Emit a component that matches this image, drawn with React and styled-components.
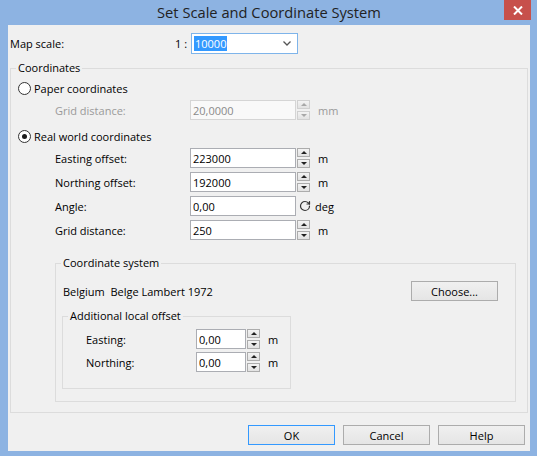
import React from "react";
import styled, { createGlobalStyle } from "styled-components";

const GlobalStyle = createGlobalStyle`
  html, body { margin: 0; padding: 0; }
  body {
    font-family: "Open Sans", "Noto Sans", sans-serif;
    font-size: 11px;
    color: #000;
  }
  * { box-sizing: border-box; }
`;

const Window = styled.div`
  width: 537px;
  height: 456px;
  background: #8db3e2;
  padding: 0 7px 5px 8px;
  display: flex;
  flex-direction: column;
`;

const TitleBar = styled.div`
  height: 25px;
  display: grid;
  grid-template-columns: 1fr auto 1fr;
  align-items: center;
`;

const Title = styled.div`
  grid-column: 2;
  font-size: 14.7px;
  line-height: 25px;
  color: #222;
`;

const CloseButton = styled.div`
  grid-column: 3;
  justify-self: end;
  align-self: start;
  width: 27px;
  height: 20px;
  margin-right: -1px;
  background: #c7504b;
  display: flex;
  align-items: center;
  justify-content: center;
`;

const Client = styled.div`
  flex: 1;
  background: #f0f0f0;
  padding: 8px 2px 0 2px;
  display: flex;
  flex-direction: column;
`;

const Row = styled.div`
  display: flex;
  align-items: center;
  height: ${(p) => p.$h || 20}px;
  margin-top: ${(p) => p.$mt || 0}px;
  margin-left: ${(p) => p.$indent || 0}px;
`;

const Label = styled.span`
  width: ${(p) => p.$w}px;
  flex: none;
  color: ${(p) => (p.$disabled ? "#9a9a9a" : "#000")};
  white-space: pre;
`;

const Combo = styled.div`
  width: 107px;
  height: 21px;
  border: 1px solid #7eb4ea;
  background: #fff;
  display: flex;
  align-items: center;
  padding-left: 2px;
`;

const Selected = styled.span`
  background: #3399ff;
  color: #fff;
  line-height: 15px;
  padding: 0 1px;
`;

const ComboArrow = styled.svg`
  margin-left: auto;
  margin-right: 6px;
`;

const GroupBox = styled.fieldset`
  margin: ${(p) => p.$mt || 0}px 0 0 ${(p) => p.$ml || 0}px;
  padding: 0 ${(p) => p.$pr || 0}px ${(p) => p.$pb || 0}px ${(p) => p.$pl || 7}px;
  border: 1px solid #dcdcdc;
  min-width: 0;
  width: ${(p) => (p.$w ? `${p.$w}px` : "auto")};
`;

const Legend = styled.legend`
  padding: 0 2px;
  margin-left: -2px;
  line-height: 16px;
`;

const RadioCircle = styled.span`
  width: 13px;
  height: 13px;
  border-radius: 50%;
  border: 1px solid #333;
  background: #fff;
  display: flex;
  align-items: center;
  justify-content: center;
  flex: none;
  &::after {
    content: "";
    width: 5px;
    height: 5px;
    border-radius: 50%;
    background: ${(p) => (p.$checked ? "#1a1a1a" : "transparent")};
  }
`;

const RadioText = styled.span`
  margin-left: 3px;
`;

const TextBox = styled.input`
  width: ${(p) => p.$w}px;
  height: 20px;
  flex: none;
  border: 1px solid ${(p) => (p.disabled ? "#d5d5d5" : "#abadb3")};
  background: ${(p) => (p.disabled ? "#f9f9f9" : "#fff")};
  color: ${(p) => (p.disabled ? "#8a8a8a" : "#000")};
  font: inherit;
  padding: 0 2px;
  margin: 0;
  outline: none;
`;

const Spinner = styled.div`
  display: flex;
  flex-direction: column;
  gap: 2px;
  width: 13px;
  height: 20px;
  margin-left: 1px;
  flex: none;
`;

const SpinButton = styled.div`
  flex: 1;
  border: 1px solid ${(p) => (p.$disabled ? "#d0d0d0" : "#acacac")};
  background: linear-gradient(#f3f3f3, #e2e2e2);
  display: flex;
  align-items: center;
  justify-content: center;
  &::after {
    content: "";
    border-left: 3px solid transparent;
    border-right: 3px solid transparent;
    ${(p) =>
      p.$down
        ? `border-top: 3px solid ${p.$disabled ? "#a8a8a8" : "#222"};`
        : `border-bottom: 3px solid ${p.$disabled ? "#a8a8a8" : "#222"};`}
  }
`;

const Unit = styled.span`
  margin-left: ${(p) => p.$ml ?? 8}px;
  color: ${(p) => (p.$disabled ? "#9a9a9a" : "#000")};
`;

const RotateIcon = styled.svg`
  margin-left: 3px;
  flex: none;
`;

const InfoRow = styled.div`
  display: flex;
  align-items: center;
  justify-content: space-between;
  height: 20px;
  margin-top: 10px;
`;

const PushButton = styled.button`
  width: 87px;
  height: 20px;
  border: 1px solid ${(p) => (p.$default ? "#3399ff" : "#acacac")};
  background: linear-gradient(#f0f0f0, #e5e5e5);
  font: inherit;
  color: #000;
  padding: 0;
  margin: 0;
  border-radius: 0;
`;

const ButtonBar = styled.div`
  display: flex;
  justify-content: flex-end;
  gap: 8px;
  margin-top: 12px;
  padding-right: 3px;
`;

function SpinBox({ disabled }) {
  return (
    <Spinner>
      <SpinButton $disabled={disabled} />
      <SpinButton $down $disabled={disabled} />
    </Spinner>
  );
}

function Radio({ checked, children, mt }) {
  return (
    <Row $mt={mt}>
      <RadioCircle $checked={checked} />
      <RadioText>{children}</RadioText>
    </Row>
  );
}

function NumberField({ label, value, unit, mt, indent, labelW, inputW, disabled }) {
  return (
    <Row $mt={mt} $indent={indent}>
      <Label $w={labelW} $disabled={disabled}>{label}</Label>
      <TextBox $w={inputW} value={value} readOnly disabled={disabled} />
      <SpinBox disabled={disabled} />
      <Unit $disabled={disabled}>{unit}</Unit>
    </Row>
  );
}

export default function App() {
  return (
    <>
      <GlobalStyle />
      <Window>
        <TitleBar>
          <Title>Set Scale and Coordinate System</Title>
          <CloseButton>
            <svg width="10" height="9" viewBox="0 0 10 9">
              <path d="M1 0.5 L9 8.5 M9 0.5 L1 8.5" stroke="#fff" strokeWidth="2" />
            </svg>
          </CloseButton>
        </TitleBar>
        <Client>
          <Row $h={21}>
            <Label $w={165}>Map scale:</Label>
            <Label $w={16}>1 :</Label>
            <Combo>
              <Selected>10000</Selected>
              <ComboArrow width="8" height="5" viewBox="0 0 8 5">
                <path d="M0.5 0.5 L4 4 L7.5 0.5" fill="none" stroke="#555" strokeWidth="1.3" />
              </ComboArrow>
            </Combo>
          </Row>

          <GroupBox $mt={6} $pl={7} $pr={11} $pb={10}>
            <Legend>Coordinates</Legend>
            <Radio mt={2}>Paper coordinates</Radio>
            <NumberField disabled mt={2} indent={37} labelW={135} inputW={106} label="Grid distance:" value="20,0000" unit="mm" />
            <Radio checked mt={6}>Real world coordinates</Radio>
            <NumberField mt={2} indent={37} labelW={135} inputW={106} label="Easting offset:" value="223000" unit="m" />
            <NumberField mt={4} indent={37} labelW={135} inputW={106} label="Northing offset:" value="192000" unit="m" />
            <Row $mt={4} $indent={37}>
              <Label $w={135}>Angle:</Label>
              <TextBox $w={106} value="0,00" readOnly />
              <RotateIcon width="12" height="12" viewBox="0 0 24 24">
                <path d="M21 12a9 9 0 1 1-9-9c2.52 0 4.93 1 6.74 2.74L21 8" fill="none" stroke="#333" strokeWidth="2.4" strokeLinecap="round" />
                <path d="M21 3v5h-5" fill="none" stroke="#333" strokeWidth="2.4" strokeLinecap="round" strokeLinejoin="round" />
              </RotateIcon>
              <Unit $ml={4}>deg</Unit>
            </Row>
            <NumberField mt={4} indent={37} labelW={135} inputW={106} label="Grid distance:" value="250" unit="m" />

            <GroupBox $mt={15} $ml={37} $pl={7} $pr={17} $pb={12}>
              <Legend>Coordinate system</Legend>
              <InfoRow>
                <Label>{"Belgium  Belge Lambert 1972"}</Label>
                <PushButton>Choose...</PushButton>
              </InfoRow>
              <GroupBox $mt={7} $ml={-1} $w={229} $pl={7} $pb={16}>
                <Legend>Additional local offset</Legend>
                <NumberField mt={5} indent={16} labelW={110} inputW={50} label="Easting:" value="0,00" unit="m" />
                <NumberField mt={3} indent={16} labelW={110} inputW={50} label="Northing:" value="0,00" unit="m" />
              </GroupBox>
            </GroupBox>
          </GroupBox>

          <ButtonBar>
            <PushButton $default>OK</PushButton>
            <PushButton>Cancel</PushButton>
            <PushButton>Help</PushButton>
          </ButtonBar>
        </Client>
      </Window>
    </>
  );
}
